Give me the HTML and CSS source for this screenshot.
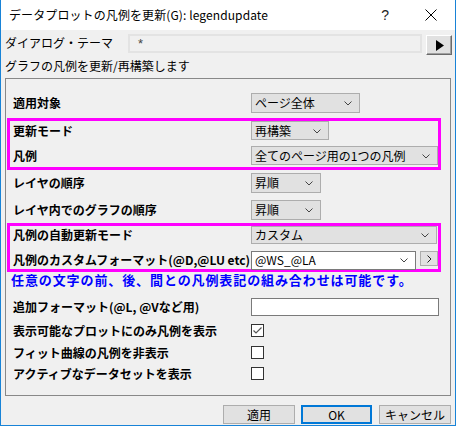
FILE: index.html
```html
<!DOCTYPE html>
<html lang="ja">
<head>
<meta charset="utf-8">
<title>legendupdate</title>
<link rel="stylesheet" href="styles.css">
</head>
<body>
<div class="window">
  <div class="titlebar">
    <span class="title">データプロットの凡例を更新(G): legendupdate</span>
    <span class="help">?</span>
    <svg class="close" width="12" height="12" viewBox="0 0 12 12"><path d="M0.5 0.5 L11.5 11.5 M11.5 0.5 L0.5 11.5" stroke="#000" stroke-width="1"/></svg>
  </div>
  <div class="content">
    <div class="theme-row">
      <span class="theme-label">ダイアログ・テーマ</span>
      <div class="theme-field">*</div>
      <div class="arrow-btn"><svg width="8" height="11" viewBox="0 0 8 11"><path d="M0 0 L8 5.5 L0 11 Z" fill="#000"/></svg></div>
    </div>
    <div class="desc">グラフの凡例を更新/再構築します</div>

    <div class="group">
      <div class="row row-first">
        <span class="label">適用対象</span>
        <div class="select w-page">ページ全体<svg class="chev" width="8" height="5" viewBox="0 0 8 5"><polyline points="0.5,0.5 4,4 7.5,0.5" fill="none" stroke="#444"/></svg></div>
      </div>

      <div class="mark mark-update">
        <div class="row row-tight">
          <span class="label">更新モード</span>
          <div class="select w-mode">再構築<svg class="chev" width="8" height="5" viewBox="0 0 8 5"><polyline points="0.5,0.5 4,4 7.5,0.5" fill="none" stroke="#444"/></svg></div>
        </div>
        <div class="row row-tight row-legend">
          <span class="label">凡例</span>
          <div class="select w-wide">全てのページ用の1つの凡例<svg class="chev" width="8" height="5" viewBox="0 0 8 5"><polyline points="0.5,0.5 4,4 7.5,0.5" fill="none" stroke="#444"/></svg></div>
        </div>
      </div>

      <div class="row row-layer">
        <span class="label">レイヤの順序</span>
        <div class="select w-order">昇順<svg class="chev" width="8" height="5" viewBox="0 0 8 5"><polyline points="0.5,0.5 4,4 7.5,0.5" fill="none" stroke="#444"/></svg></div>
      </div>
      <div class="row row-graph">
        <span class="label">レイヤ内でのグラフの順序</span>
        <div class="select w-order">昇順<svg class="chev" width="8" height="5" viewBox="0 0 8 5"><polyline points="0.5,0.5 4,4 7.5,0.5" fill="none" stroke="#444"/></svg></div>
      </div>

      <div class="mark mark-auto">
        <div class="row row-short">
          <span class="label">凡例の自動更新モード</span>
          <div class="select w-custom">カスタム<svg class="chev" width="8" height="5" viewBox="0 0 8 5"><polyline points="0.5,0.5 4,4 7.5,0.5" fill="none" stroke="#444"/></svg></div>
        </div>
        <div class="row row-short row-format">
          <span class="label">凡例のカスタムフォーマット(@D,@LU etc)</span>
          <div class="combo">@WS_@LA<svg class="chev" width="8" height="5" viewBox="0 0 8 5"><polyline points="0.5,0.5 4,4 7.5,0.5" fill="none" stroke="#444"/></svg></div>
          <div class="mini-btn"><svg width="5" height="8" viewBox="0 0 5 8"><polyline points="0.5,0.5 4,4 0.5,7.5" fill="none" stroke="#222"/></svg></div>
        </div>
      </div>

      <div class="note">任意の文字の前、後、間との凡例表記の組み合わせは可能です。</div>

      <div class="row row-extra">
        <span class="label">追加フォーマット(@L, @Vなど用)</span>
        <div class="textbox"></div>
      </div>

      <div class="row row-check row-check1">
        <span class="label">表示可能なプロットにのみ凡例を表示</span>
        <span class="check"><svg width="11" height="11" viewBox="0 0 11 11"><polyline points="1.5,5.5 4,8 9.5,2.5" fill="none" stroke="#555" stroke-width="1.2"/></svg></span>
      </div>
      <div class="row row-check row-check2">
        <span class="label">フィット曲線の凡例を非表示</span>
        <span class="check"></span>
      </div>
      <div class="row row-check row-check3">
        <span class="label">アクティブなデータセットを表示</span>
        <span class="check"></span>
      </div>
    </div>

    <div class="buttons">
      <div class="btn btn-apply">適用</div>
      <div class="btn btn-default">OK</div>
      <div class="btn">キャンセル</div>
    </div>
  </div>
</div>
</body>
</html>
```

FILE: styles.css
```css
* { box-sizing: border-box; }

html, body {
  margin: 0;
  padding: 0;
  background: #f0f0f0;
}

body {
  font-family: "Noto Sans CJK JP", "Noto Sans", sans-serif;
  font-size: 12px;
  color: #000;
}

.window {
  width: 456px;
  height: 426px;
  border: 1px solid #1883d7;
  border-top: none;
  background: #f0f0f0;
  display: flex;
  flex-direction: column;
  overflow: hidden;
}

/* title bar */
.titlebar {
  height: 30px;
  background: #fff;
  display: flex;
  align-items: center;
  padding-left: 8px;
  flex: none;
}
.title {
  font-size: 12px;
  letter-spacing: 0.1px;
  line-height: 16px;
}
.help {
  margin-left: auto;
  margin-right: 36px;
  font-family: "Liberation Sans", sans-serif;
  font-size: 14px;
  font-weight: 300;
  color: #222;
}
.close {
  margin-right: 18px;
}

.content {
  flex: 1;
  display: flex;
  flex-direction: column;
}

/* dialog theme */
.theme-row {
  display: flex;
  align-items: flex-start;
  margin-top: 4px;
  height: 21px;
  flex: none;
}
.theme-label {
  width: 127px;
  padding-left: 4px;
  line-height: 18px;
}
.theme-field {
  width: 294px;
  height: 19px;
  border: 2px solid #e3e3e3;
  background: #f0f0f0;
  padding-left: 8px;
  line-height: 15px;
  color: #444;
  font-family: "Liberation Sans", sans-serif;
  font-size: 13px;
}
.arrow-btn {
  margin-left: 4px;
  margin-top: 1px;
  width: 26px;
  height: 20px;
  background: #e1e1e1;
  border: 1px solid;
  border-color: #fff #6a6a6a #6a6a6a #fff;
  box-shadow: inset -1px -1px #a0a0a0;
  display: flex;
  align-items: center;
  justify-content: center;
  padding-left: 2px;
}

.desc {
  margin-top: 3px;
  padding-left: 4px;
  line-height: 16px;
  height: 16px;
  flex: none;
}

/* group box */
.group {
  margin-top: 4px;
  margin-left: 4px;
  width: 446px;
  border: 1px solid #888;
  padding: 14px 0 15px 7px;
  flex: none;
}

.row {
  display: flex;
  align-items: center;
  height: 20px;
}
.label {
  width: 238px;
  flex: none;
  font-weight: bold;
  line-height: 16px;
  white-space: nowrap;
}

.row-tight { height: 19px; }
.row-legend { margin-top: 6px; }
.row-layer { margin-top: 3px; }
.row-graph { margin-top: 7px; }
.row-short { height: 18px; }
.row-format { margin-top: 7px; }
.row-extra { height: 18px; margin-top: 11px; }
.row-check { height: 13px; }
.row-check1 { margin-top: 8px; }
.row-check2 { margin-top: 9px; }
.row-check3 { margin-top: 8px; }

/* highlighted frames */
.mark {
  margin-left: -6px;
  width: 434px;
  border: 3px solid #ff00ff;
  padding-left: 3px;
}
.mark-update {
  margin-top: 5px;
  padding-bottom: 2px;
}
.mark-auto {
  margin-top: 3px;
}

/* drop-down lists */
.select {
  position: relative;
  height: 100%;
  background: #e1e1e1;
  border: 1px solid #adadad;
  padding-left: 3px;
  line-height: 16px;
  display: flex;
  align-items: center;
  white-space: nowrap;
}
.chev {
  position: absolute;
  right: 7px;
  top: 50%;
  margin-top: -2px;
}
.w-page { width: 109px; }
.w-mode { width: 78px; }
.w-wide { width: 187px; }
.w-order { width: 70px; }
.w-custom { width: 186px; }

.combo {
  position: relative;
  width: 166px;
  height: 19px;
  background: #fff;
  border: 1px solid #7a7a7a;
  padding-left: 3px;
  display: flex;
  align-items: center;
  line-height: 16px;
}
.mini-btn {
  margin-left: 4px;
  align-self: flex-start;
  width: 18px;
  height: 15px;
  background: #e1e1e1;
  border: 1px solid #adadad;
  display: flex;
  align-items: center;
  justify-content: center;
}

.note {
  height: 15px;
  line-height: 15px;
  margin-left: -2px;
  color: #0000ff;
  font-weight: bold;
  font-size: 13px;
  letter-spacing: 0.9px;
  white-space: nowrap;
}

.textbox {
  width: 188px;
  height: 18px;
  background: #fff;
  border: 1px solid #7a7a7a;
}

.check {
  width: 13px;
  height: 13px;
  border: 1px solid #333;
  background: #fff;
  display: flex;
  align-items: center;
  justify-content: center;
}

/* bottom buttons */
.buttons {
  display: flex;
  justify-content: flex-end;
  margin-top: 9px;
  padding-right: 4px;
  flex: none;
}
.btn {
  width: 72px;
  height: 19px;
  background: #e1e1e1;
  border: 1px solid #adadad;
  text-align: center;
  line-height: 17px;
}
.btn-apply {
  margin-right: 6px;
}
.btn-default {
  width: 71px;
  border: 2px solid #0078d7;
  line-height: 15px;
  margin-right: 7px;
}
```
